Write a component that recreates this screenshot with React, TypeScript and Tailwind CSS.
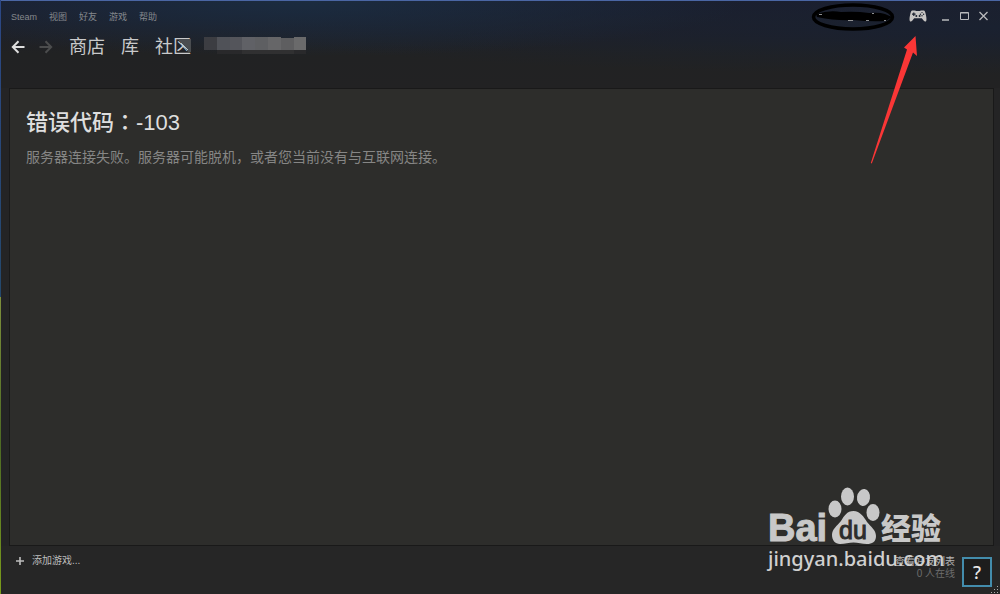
import React from "react";

const menus = ["Steam", "视图", "好友", "游戏", "帮助"];

function ArrowIcon({ flip = false }: { flip?: boolean }) {
  return (
    <svg width="14" height="14" viewBox="0 0 14 14" fill="none" stroke="currentColor" strokeWidth="2" aria-hidden="true">
      {flip ? <path d="M0.5 7H12M6.5 1.2L12.2 7L6.5 12.8" /> : <path d="M13.5 7H2M7.5 1.2L1.8 7L7.5 12.8" />}
    </svg>
  );
}

function GamepadIcon() {
  return (
    <svg className="block" width="18" height="12" viewBox="0 0 18 12" aria-hidden="true">
      <path
        fill="#c6c4c2"
        d="M3.200 .6H6.200L7 1.100H11L11.800 .6H14.800C15.700 .8 16.300 2.200 16.700 4C17.200 6.200 17.800 9.200 17.300 10.700C16.900 11.800 15.600 11.800 14.800 10.800L12.800 8.200H5.200L3.200 10.800C2.400 11.800 1.100 11.800 .7 10.700C.2 9.200 .8 6.200 1.300 4C1.700 2.200 2.300 .8 3.200 .6Z"
      />
      <path stroke="#1b212d" strokeWidth="1.200" d="M3 4.200H6.600M4.800 2.400V6" />
      <g fill="#1b212d">
        <circle cx="13" cy="2.600" r=".7" />
        <circle cx="13" cy="5.800" r=".7" />
        <circle cx="11.400" cy="4.200" r=".7" />
        <circle cx="14.600" cy="4.200" r=".7" />
        <circle cx="7.300" cy="6" r="1" />
        <circle cx="10.600" cy="6" r="1" />
      </g>
    </svg>
  );
}

function TitleBar() {
  return (
    <div className="flex items-start justify-between pr-3">
      <nav className="flex gap-3 pt-2 pl-[10px] text-[9px] leading-4 text-[#85888d]" aria-label="菜单">
        {menus.map((m) => (
          <button key={m} type="button">{m}</button>
        ))}
      </nav>
      <div className="flex items-center pt-[7px]">
        <button type="button" aria-label="账户" className="mr-[14px]">
          <svg width="84" height="32" viewBox="0 0 84 32" className="-my-2 block" fill="none" aria-hidden="true">
            <ellipse cx="42" cy="17" rx="39.500" ry="12" stroke="#000" strokeWidth="3.500" />
            <path fill="#000" d="M5 14Q18 10 30 12Q45 11 58 13Q68 12 74 14L81 17L75 21Q60 22 42 20Q26 21 6 17Z" />
            <path stroke="#8f9092" strokeWidth="1" d="M8 14.500H11M37 20.500H42M55 20.500H58M61 13.500H63M73 20.500H75" />
          </svg>
        </button>
        <button type="button" aria-label="大屏幕模式"><GamepadIcon /></button>
        <div className="ml-[14px] flex gap-[10px] text-[#b9babc]">
          <button type="button" aria-label="最小化">
            <svg width="9" height="10" viewBox="0 0 9 10" className="block" aria-hidden="true"><path d="M1 9H8" stroke="currentColor" strokeWidth="1.500" /></svg>
          </button>
          <button type="button" aria-label="最大化">
            <svg width="9" height="10" viewBox="0 0 9 10" className="block" fill="none" stroke="currentColor" aria-hidden="true"><path d="M.5 1.500H8.500V8.500H.5ZM.5 2H8.500" /></svg>
          </button>
          <button type="button" aria-label="关闭">
            <svg width="9" height="10" viewBox="0 0 9 10" className="block" stroke="currentColor" strokeWidth="1.300" aria-hidden="true"><path d="M.5 1 8.500 9M8.500 1 .5 9" /></svg>
          </button>
        </div>
      </div>
    </div>
  );
}

function NavBar() {
  return (
    <nav className="flex items-center pl-[10px] text-lg leading-6 text-[#c9cacb]" aria-label="主导航">
      <button type="button" aria-label="后退" className="mr-[14px] text-[#dedede]"><ArrowIcon /></button>
      <button type="button" aria-label="前进" className="mr-4 text-[#4b4c4d]"><ArrowIcon flip /></button>
      <a href="#store" className="mr-4">商店</a>
      <a href="#library" className="mr-4">库</a>
      <a href="#community" className="relative">
        社区
        <svg className="absolute top-1 right-0" width="12" height="13" viewBox="0 0 12 13" aria-hidden="true">
          <path fill="#4a4d50" d="M0 0H12V13H9L5 7L0 2Z" />
          <path stroke="#b4c4cc" fill="none" d="M2 4L9 11" />
        </svg>
      </a>
      <svg className="-mt-1 ml-[13px]" width="102" height="18" viewBox="0 0 102 18" shapeRendering="crispEdges" aria-hidden="true">
        <path fill="#3c3d42" d="M0 1H13V14H0Z" />
        <path fill="#505258" d="M13 1H26V14H13Z" />
        <path fill="#54555b" d="M26 1H38V14H26Z" />
        <path fill="#606166" d="M38 1H51V14H38Z" />
        <path fill="#5e5f62" d="M51 1H64V14H51Z" />
        <path fill="#666668" d="M64 1H77V14H64Z" />
        <path fill="#5e5e60" d="M77 2H90V14H77Z" />
        <path fill="#6a6a6b" d="M90 1H102V14H90Z" />
        <path fill="#29292b" d="M13 14H102V18H13Z" />
        <path fill="#303031" d="M38 14H90V18H38Z" />
      </svg>
    </nav>
  );
}

function Watermark() {
  return (
    <svg className="pointer-events-none absolute right-[50px] bottom-[14px]" width="184" height="94" viewBox="0 0 184 94" fill="#c8c8c8" aria-hidden="true">
      <text x="2" y="55" fontSize="38" fontWeight="700" stroke="#c8c8c8" strokeWidth="1" className="font-['Liberation_Sans']">Bai</text>
      <ellipse cx="69" cy="23" rx="6.500" ry="8.500" />
      <ellipse cx="81.500" cy="10.500" rx="6.500" ry="9" />
      <ellipse cx="97.500" cy="11.500" rx="6.500" ry="8.500" transform="rotate(8 97.500 11.500)" />
      <ellipse cx="107" cy="26.500" rx="6.500" ry="8.500" />
      <path d="M87.500 25C94 25 98 31 101 36C105 41 110 44 110 50C110 56 106 58 101 58C96 58 92 56.500 87.500 56.500C83 56.500 79 58 74 58C69 58 66 54 66 49C66 43 71 40 75 35C78 30 81 25 87.500 25Z" />
      <text x="73" y="53" fontSize="25" fontWeight="400" fill="#2d2d2b" stroke="#2d2d2b" strokeWidth="1" className="font-['Liberation_Sans']">du</text>
      <text x="115" y="53" fontSize="30" fontWeight="900" className="font-['Noto_Sans_CJK_SC']">经验</text>
      <text x="2" y="80" fontSize="20" fontWeight="500" fill="#d0d0d0" className="font-['Noto_Sans']">jingyan.baidu.com</text>
    </svg>
  );
}

export default function App() {
  return (
    <div className="relative flex min-h-screen overflow-hidden bg-[#242425] font-['Liberation_Sans','Noto_Sans_CJK_SC',sans-serif]">
      <div className="flex w-px shrink-0 flex-col">
        <div className="grow bg-linear-to-b from-[#2c4785] to-[#24486c]" />
        <div className="grow bg-linear-to-b from-[#7d8f3c] via-[#4d6a24] to-[#7b9c1a]" />
      </div>
      <div className="flex min-w-0 grow flex-col border-t border-[#4a66a4]">
        <header className="flex h-[87px] flex-col gap-[10px] bg-[radial-gradient(ellipse_at_30%_0%,#1b2c40_0%,#1b2c4000_45%),radial-gradient(ellipse_at_100%_30%,#1a2130_0%,#1a213000_55%),linear-gradient(#1a1e30,#212223_60%,#222223)]">
          <TitleBar />
          <NavBar />
        </header>
        <main className="mr-[6px] ml-2 grow border border-[#191919] bg-[#2d2d2b] px-4 pt-[15px]">
          <h1 className="text-[22px] leading-8 font-medium text-[#dedede]">
            错误代码<span className="font-['Noto_Sans_CJK_TC']" lang="zh-TW">：</span>-103
          </h1>
          <p className="mt-[6px] text-sm leading-6 text-[#868685]">服务器连接失败。服务器可能脱机，或者您当前没有与互联网连接。</p>
        </main>
        <footer className="flex h-12 items-start justify-between bg-[#262626] pr-2 pl-[15px]">
          <button type="button" className="flex items-center gap-2 pt-[5px] text-[10px] leading-5 text-[#bdbdbd]">
            <svg width="8" height="8" viewBox="0 0 8 8" aria-hidden="true"><path d="M4 0V8M0 4H8" stroke="currentColor" strokeWidth="1.600" /></svg>
            添加游戏...
          </button>
          <div className="flex gap-[7px] pt-[10px]">
            <div className="text-right text-[10px] leading-3">
              <a href="#friends" className="block text-[#b5b5b5]">查看好友列表</a>
              <span className="block text-[#6d6d6d]">0 人在线</span>
            </div>
            <button type="button" aria-label="帮助" className="mt-px flex size-[30px] items-center justify-center border-2 border-[#438cac] bg-[#1d1d1d] font-['Noto_Sans'] text-lg font-medium text-[#e8e8e8]">?</button>
          </div>
        </footer>
      </div>
      <Watermark />
      <svg className="pointer-events-none absolute top-9 right-[82px]" width="48" height="128" viewBox="0 0 48 128" aria-hidden="true">
        <path fill="#fa3636" d="M45.500 0 47 20 43 16.500 1.800 127.500.8 127 37 13.500 34 11.500Z" />
      </svg>
      <svg className="pointer-events-none absolute right-0 bottom-0" width="10" height="8" viewBox="0 0 10 8" fill="#aaa" aria-hidden="true">
        <path d="M7 0H8V1H7ZM4 3H5V4H4ZM7 3H8V4H7ZM1 6H2V7H1ZM4 6H5V7H4ZM7 6H8V7H7Z" />
      </svg>
    </div>
  );
}
